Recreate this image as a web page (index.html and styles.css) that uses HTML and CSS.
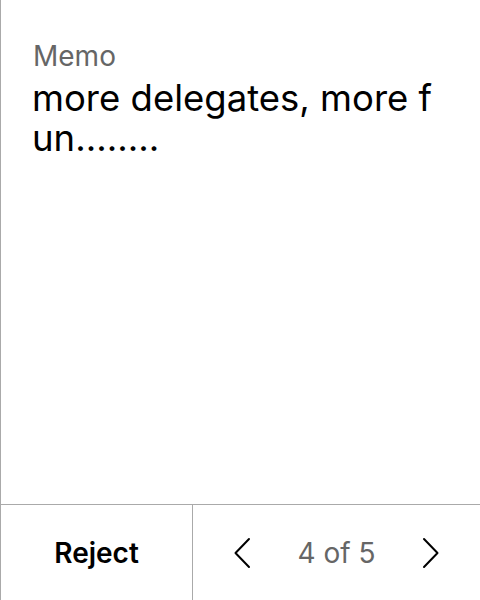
FILE: index.html
```html
<!DOCTYPE html>
<html>
<head>
<meta charset="utf-8">
<link rel="stylesheet" href="styles.css">
</head>
<body>
<div class="app">
  <div class="content">
    <div class="label">Memo</div>
    <div class="memo">more delegates, more fun........</div>
  </div>
  <div class="footer">
    <button class="reject">Reject</button>
    <div class="pager">
      <button class="nav" aria-label="Previous">
        <svg width="18" height="32" viewBox="0 0 18 32"><path d="M16 2 L2.5 16 L16 30" fill="none" stroke="#000" stroke-width="2" stroke-linecap="round" stroke-linejoin="round"/></svg>
      </button>
      <span class="count">4 of 5</span>
      <button class="nav" aria-label="Next">
        <svg width="18" height="32" viewBox="0 0 18 32"><path d="M2 2 L15.5 16 L2 30" fill="none" stroke="#000" stroke-width="2" stroke-linecap="round" stroke-linejoin="round"/></svg>
      </button>
    </div>
  </div>
</div>
</body>
</html>
```
FILE: styles.css
```css
* { box-sizing: border-box; }
html, body { margin: 0; padding: 0; }
body {
  font-family: Inter, "Noto Sans", sans-serif;
  background: #fff;
  color: #000;
}
.app {
  width: 480px;
  height: 600px;
  border-left: 1px solid #aaa;
  display: flex;
  flex-direction: column;
}
.content {
  flex: 1;
  padding: 40px 36px 0 31px;
}
.label {
  font-size: 28px;
  line-height: 32px;
  color: #666;
  padding-left: 1px;
}
.memo {
  font-size: 36.5px;
  line-height: 40px;
  color: #000;
  word-break: break-all;
  margin-top: 6px;
}
.footer {
  height: 96px;
  border-top: 1px solid #aaa;
  display: flex;
}
button {
  font-family: inherit;
  background: none;
  border: none;
  padding: 0;
  cursor: pointer;
}
.reject {
  width: 192px;
  border-right: 1px solid #aaa;
  font-size: 28px;
  font-weight: 600;
  color: #000;
}
.pager {
  flex: 1;
  display: flex;
  align-items: center;
  justify-content: center;
  gap: 46px;
}
.nav {
  display: flex;
  align-items: center;
}
.count {
  font-size: 28px;
  color: #666;
}
```
